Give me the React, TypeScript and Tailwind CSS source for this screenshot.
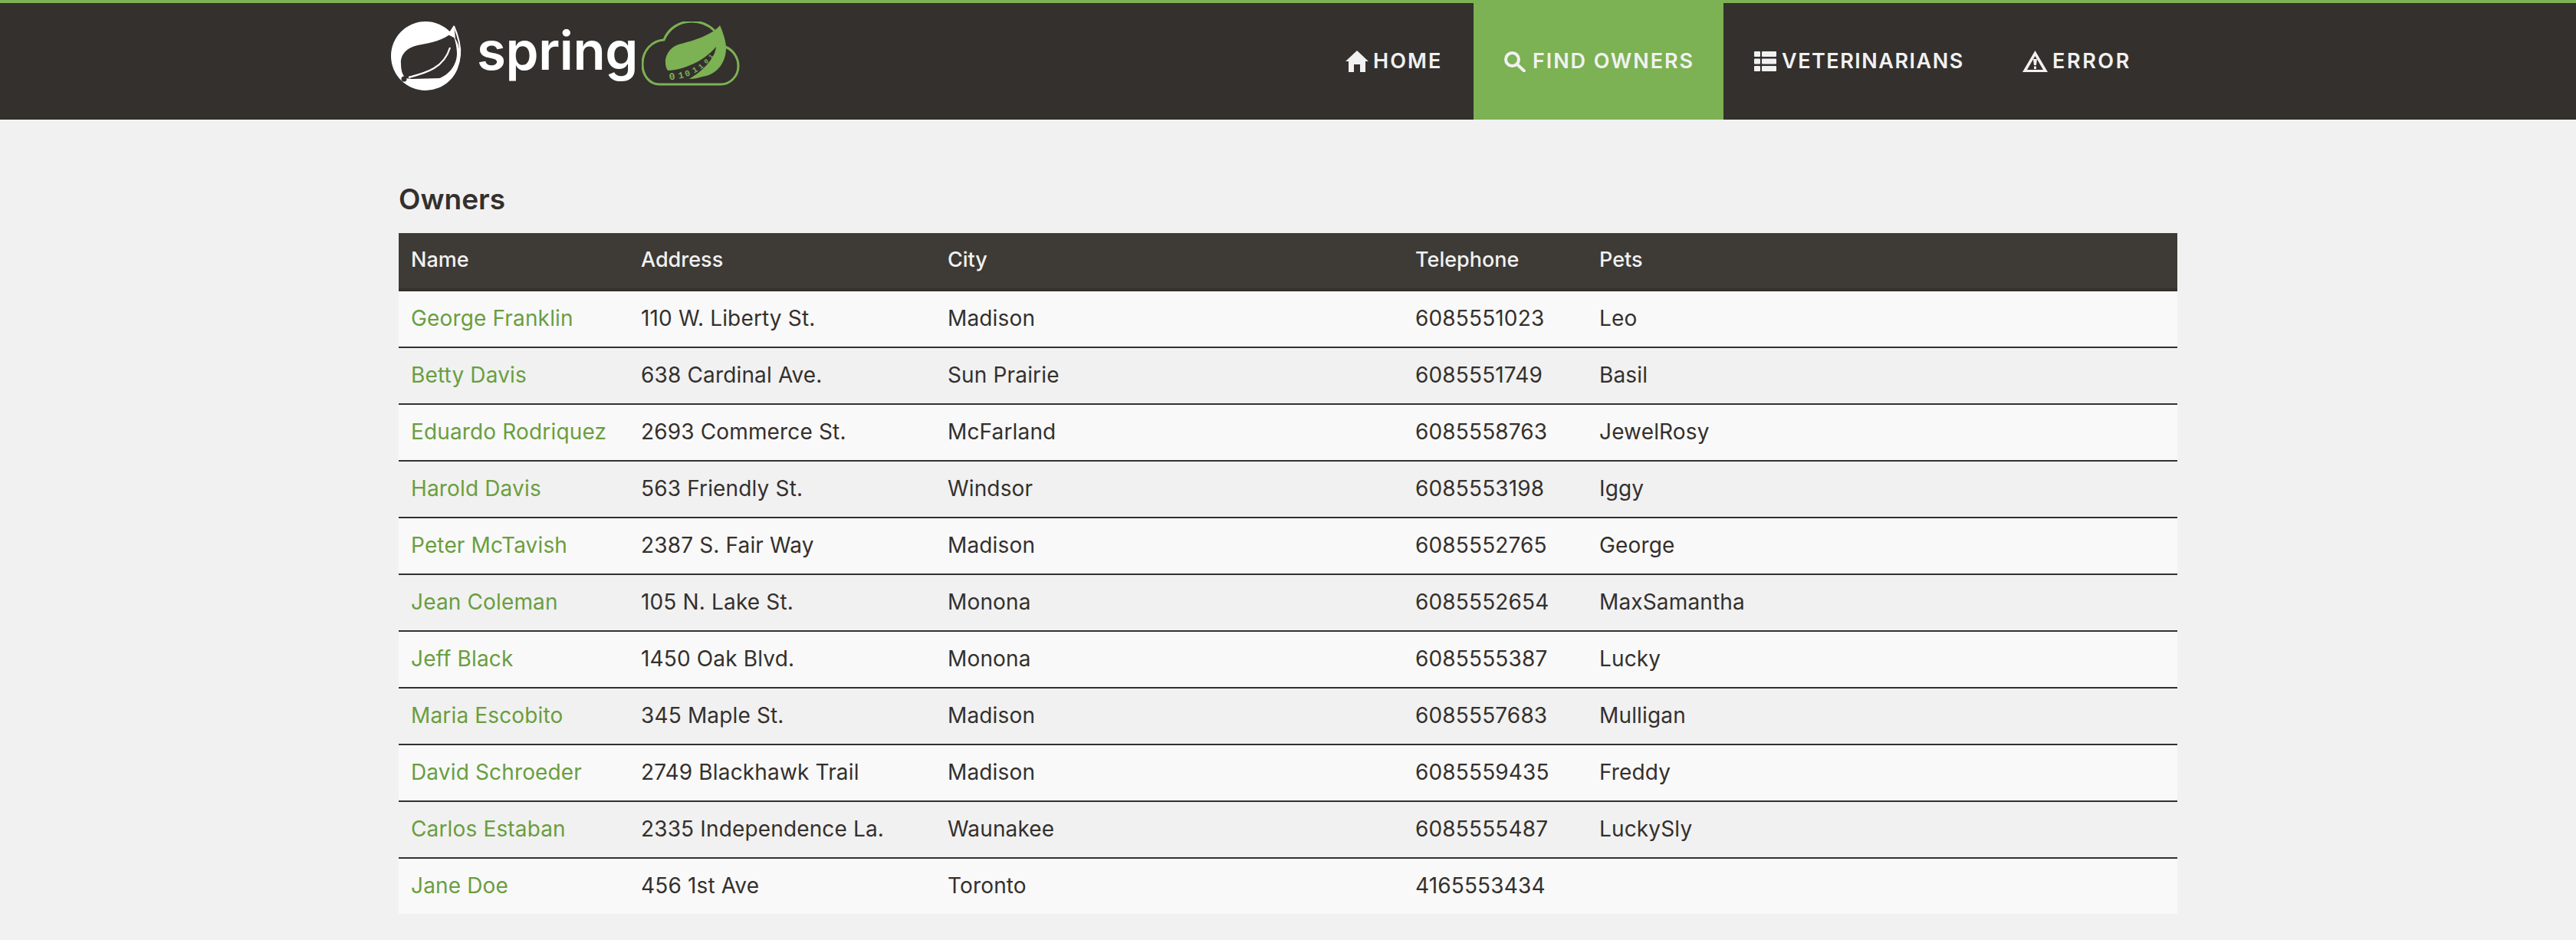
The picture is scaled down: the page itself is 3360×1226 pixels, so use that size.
const owners = [
  ["George Franklin", "110 W. Liberty St.", "Madison", "6085551023", "Leo"],
  ["Betty Davis", "638 Cardinal Ave.", "Sun Prairie", "6085551749", "Basil"],
  ["Eduardo Rodriquez", "2693 Commerce St.", "McFarland", "6085558763", "JewelRosy"],
  ["Harold Davis", "563 Friendly St.", "Windsor", "6085553198", "Iggy"],
  ["Peter McTavish", "2387 S. Fair Way", "Madison", "6085552765", "George"],
  ["Jean Coleman", "105 N. Lake St.", "Monona", "6085552654", "MaxSamantha"],
  ["Jeff Black", "1450 Oak Blvd.", "Monona", "6085555387", "Lucky"],
  ["Maria Escobito", "345 Maple St.", "Madison", "6085557683", "Mulligan"],
  ["David Schroeder", "2749 Blackhawk Trail", "Madison", "6085559435", "Freddy"],
  ["Carlos Estaban", "2335 Independence La.", "Waunakee", "6085555487", "LuckySly"],
  ["Jane Doe", "456 1st Ave", "Toronto", "4165553434", ""],
];

function SpringLeaf() {
  return (
    <svg width="104" height="90" viewBox="8 8 104 90" className="shrink-0">
      <circle cx="55" cy="53" r="45" fill="#fff" />
      <path d="M90 22C80 32 62 36 45 39C30 42 22 52 23 63C23 72 25 78 29 82L37 83L73 82C85 78 96 65 96 50C96 40 93 30 90 22Z" fill="#34302d" />
      <path d="M92 14C98 28 101 42 100 52C99 64 94 74 86 82" fill="none" stroke="#fff" strokeWidth="2" />
      <path d="M92 13L94 30L84 25Z" fill="#fff" />
      <path d="M87 42C84 52 78 62 66 69C56 75 44 78 33 81" fill="none" stroke="#fff" strokeWidth="2.2" />
      <circle cx="27" cy="83" r="3.5" fill="#34302d" />
    </svg>
  );
}

function CloudLeaf() {
  const digits: [string, number, number, number][] = [
    ["0", 47, 84, -8],
    ["1", 59, 82, -12],
    ["0", 68, 79, -20],
    ["1", 78, 74, -30],
    ["1", 86, 69, -38],
    ["0", 93, 62, -45],
    ["1", 99, 55, -52],
  ];
  return (
    <svg width="128" height="90" viewBox="7 8 128 90" className="ml-[5px] shrink-0">
      <path d="M102 20C94 12 84 8 72 8C56 8 42 17 36 32C20 33 8 46 8 64C8 78 17 90 30 90L110 90C122 90 133 80 133 66C133 55 126 45 116 41" fill="none" stroke="#7cb154" strokeWidth="3" />
      <path d="M109 13C100 25 75 33 55 38C42 42 37 55 38 62C38 66 39 69 41 72C62 71 88 60 104 41C103 55 88 72 69 83C75 83 80 82 86 80C108 77 118 58 117 40C116 30 112 20 109 13Z" fill="#7cb154" />
      {digits.map(([d, x, y, r], i) => (
        <text key={i} x={x} y={y} transform={`rotate(${r} ${x} ${y})`} fontSize={13 - i * 0.9} fontWeight="700" textAnchor="middle" fill="#7cb154" fontFamily="Liberation Mono, monospace">{d}</text>
      ))}
    </svg>
  );
}

function HomeIcon() {
  return (
    <svg width="30" height="28" viewBox="0 0 30 28" fill="#f1f1f1">
      <path d="M15 0L30 14H26V28H19V18H11V28H4V14H0Z" />
    </svg>
  );
}

function SearchIcon() {
  return (
    <svg width="28" height="27" viewBox="0 0 28 27" fill="none" stroke="#f1f1f1" strokeWidth="4">
      <circle cx="10.5" cy="10.5" r="8.5" />
      <path d="M17 17L26 25.5" strokeLinecap="round" />
    </svg>
  );
}

function ListIcon() {
  return (
    <svg width="29" height="26" viewBox="0 0 29 26" fill="#f1f1f1">
      <rect x="0" y="0" width="8" height="7" rx="1" />
      <rect x="10" y="0" width="19" height="7" rx="1" />
      <rect x="0" y="9.5" width="8" height="7" rx="1" />
      <rect x="10" y="9.5" width="19" height="7" rx="1" />
      <rect x="0" y="19" width="8" height="7" rx="1" />
      <rect x="10" y="19" width="19" height="7" rx="1" />
    </svg>
  );
}

function WarningIcon() {
  return (
    <svg width="33" height="28" viewBox="0 0 33 28" fill="#f1f1f1">
      <path fillRule="evenodd" d="M16.5 0L33 28H0ZM16.5 7L6 25H27Z" />
      <path d="M14 11H19L18 19H15ZM15 20.5H18V24H15Z" />
    </svg>
  );
}

function NavLink({ icon, label, className }: { icon: React.ReactNode; label: string; className: string }) {
  return (
    <a className={`flex items-center text-[27px] font-semibold text-[#f1f1f1] ${className}`}>
      {icon}
      <span>{label}</span>
    </a>
  );
}

export default function App() {
  return (
    <div className="min-h-[1226px] bg-[#f1f1f1] font-['Inter',sans-serif] text-[#34302d]">
      <nav className="flex h-[156px] border-t-4 border-[#7cb154] bg-[#34302d]">
        <div className="ml-[508px] flex w-[2311px] justify-between">
          <div className="flex items-start pt-6 text-white">
            <SpringLeaf />
            <span className="ml-[10px] text-[69px] leading-[76px] font-semibold tracking-[-0.4px]">spring</span>
            <CloudLeaf />
          </div>
          <div className="flex">
            <NavLink icon={<HomeIcon />} label="HOME" className="w-[207px] gap-[6px] pl-10 tracking-[2.1px]" />
            <NavLink icon={<SearchIcon />} label="FIND OWNERS" className="w-[326px] gap-[9px] bg-[#7cb154] pl-10 tracking-[1.9px]" />
            <NavLink icon={<ListIcon />} label="VETERINARIANS" className="w-[353px] gap-[7px] pl-10 tracking-[1.5px]" />
            <NavLink icon={<WarningIcon />} label="ERROR" className="w-[218px] gap-[6px] pl-[37px] tracking-[2.6px]" />
          </div>
        </div>
      </nav>

      <main className="mx-auto w-[2320px]">
        <h2 className="flex h-[148px] items-end pb-[26px] text-[37px] leading-none font-semibold">Owners</h2>
        <table className="w-full table-fixed border-separate border-spacing-0 text-[28px] tracking-[0.15px]">
          <colgroup>
            <col className="w-[300px]" />
            <col className="w-[400px]" />
            <col className="w-[610px]" />
            <col className="w-[240px]" />
            <col />
          </colgroup>
          <thead>
            <tr className="bg-[#3e3a35] text-left text-[27px] tracking-normal text-[#f1f1f1]">
              {["Name", "Address", "City", "Telephone", "Pets"].map((h) => (
                <th key={h} className="h-[76px] border-b-4 border-[#34302d] px-4 pb-[2px] font-medium">{h}</th>
              ))}
            </tr>
          </thead>
          <tbody>
            {owners.map((o, i) => (
              <tr key={o[0]} className={i % 2 === 0 ? "bg-[#f9f9f9]" : ""}>
                {o.map((cell, j) => (
                  <td key={j} className={`px-4 pb-[2px] ${i < owners.length - 1 ? "h-[74px] border-b-2 border-[#34302d]" : "h-[72px]"} ${j === 0 ? "text-[#6a9e3f]" : ""}`}>{cell}</td>
                ))}
              </tr>
            ))}
          </tbody>
        </table>
      </main>
    </div>
  );
}
